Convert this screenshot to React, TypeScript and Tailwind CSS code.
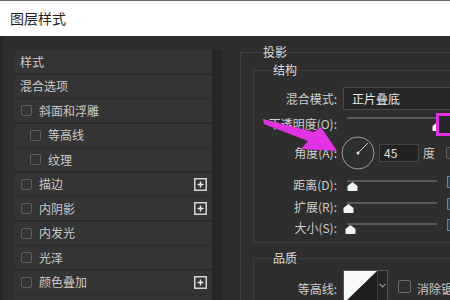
const rows = [
  { label: "样式" },
  { label: "混合选项" },
  { label: "斜面和浮雕", cb: true },
  { label: "等高线", cb: true, indent: true },
  { label: "纹理", cb: true, indent: true },
  { label: "描边", cb: true, plus: true },
  { label: "内阴影", cb: true, plus: true },
  { label: "内发光", cb: true },
  { label: "光泽", cb: true },
  { label: "颜色叠加", cb: true, plus: true },
  { label: "", cb: false },
]

function Box({ className = "" }: { className?: string }) {
  return <span className={"block w-[11px] h-[11px] shrink-0 rounded-[2px] border border-[#5e5e5e] bg-[#343434] " + className} />
}

function Plus() {
  return (
    <svg width="13" height="13" viewBox="0 0 13 13" className="ml-auto shrink-0">
      <rect x="0.75" y="0.75" width="11.5" height="11.5" fill="none" stroke="#d6d6d6" strokeWidth="1.5" />
      <path d="M3.5 6.5h6M6.5 3.5v6" stroke="#e8e8e8" strokeWidth="1.5" />
    </svg>
  )
}

function Thumb({ ml }: { ml: string }) {
  return (
    <svg width="11" height="9" viewBox="0 0 11 9" className={"block " + ml}>
      <path d="M5.5 0 10.5 4 10.5 8.2Q10.5 9 9.7 9H1.3Q0.5 9 0.5 8.2V4Z" fill="#f4f4f4" />
    </svg>
  )
}

function Label({ children }: { children: React.ReactNode }) {
  return <span className="w-[83px] shrink-0 text-right text-[12px] leading-none text-[#cdcdcd]">{children}</span>
}

function Slider({ thumb, gap = "" }: { thumb: string; gap?: string }) {
  return (
    <div className="ml-[6px] w-[94px] shrink-0 flex flex-col">
      <div className="ml-[4px] w-[90px] h-[2px] bg-[#5a5a5a]" />
      <div className={gap}>
        <Thumb ml={thumb} />
      </div>
    </div>
  )
}

function SideField() {
  return <div className="ml-[10px] w-[20px] h-[12px] shrink-0 -translate-y-[3px] border border-[#5f86a8] bg-[#2d4457]" />
}

export default function App() {
  return (
    <div className="relative w-[450px] h-[300px] overflow-hidden bg-[#2e2e2e] font-['Noto_Sans_CJK_SC','Microsoft_YaHei',sans-serif]">
      <div className="h-[36px] bg-white border-t border-[#6a6a6a] flex items-center pl-[10px]">
        <span className="text-[14px] text-[#1e1e1e]">图层样式</span>
      </div>

      <div className="flex h-[264px]">
        {/* left list */}
        <div className="w-[212px] shrink-0 pl-[12px] pt-[14px] border-l-[3px] border-[#262626]">
          <div className="flex flex-col gap-[1.5px] bg-[#2a2a2a]">
            {rows.map((r, i) => (
              <div key={i} className={"h-[23px] shrink-0 flex items-center bg-[#343434] pr-[5px] " + (r.indent ? "pl-[15px]" : r.cb ? "pl-[6px]" : "pl-[5px]")}>
                {r.cb && <Box className="mr-[7px]" />}
                <span className="text-[12px] leading-none text-[#cacaca]">{r.label}</span>
                {r.plus && <Plus />}
              </div>
            ))}
          </div>
        </div>
        <div className="w-[10px] shrink-0 mt-[14px] bg-[#272727]" />

        {/* right settings */}
        <div className="flex-1 pl-[18px] pt-[8px]">
          <fieldset className="border border-r-0 border-b-0 border-[#3f3f3f] h-[300px]">
            <legend className="ml-[22px] text-[12px] leading-[16px] text-[#dedede]">投影</legend>

            <fieldset className="ml-[12px] mt-[2px] border border-r-0 border-[#3f3f3f] pb-[4px]">
              <legend className="ml-[19px] text-[12px] leading-[16px] text-[#dedede]">结构</legend>

              <div className="mt-[9px] h-[23px] flex items-center">
                <Label>混合模式:</Label>
                <div className="ml-[6px] w-[120px] h-[23px] shrink-0 border border-[#4a4a4a] bg-[#262626] pl-[8px] flex items-center text-[12px] text-[#e8e8e8]">
                  正片叠底
                </div>
              </div>

              <div className="mt-[2px] h-[24px] flex items-center">
                <Label>不透明度(O):</Label>
                <Slider thumb="ml-[89px]" gap="mt-[3px]" />
                <div className="-ml-[1px] w-[22px] h-[23px] shrink-0 border-[3px] border-[#e22fe2] bg-[#262626]" />
              </div>

              <div className="h-[33px] flex items-center">
                <Label>角度(A):</Label>
                <svg width="34" height="34" viewBox="0 0 34 34" className="ml-[4px] shrink-0">
                  <circle cx="17" cy="17" r="16" fill="none" stroke="#9c9c9c" strokeWidth="1" />
                  <line x1="17" y1="17" x2="27" y2="7" stroke="#d0d0d0" strokeWidth="1" />
                  <circle cx="17" cy="17" r="1.5" fill="#e0e0e0" />
                </svg>
                <div className="ml-[4px] w-[40px] h-[18px] shrink-0 border border-[#454545] bg-[#222] pl-[4px] flex items-center text-[12px] text-[#e0e0e0]">
                  45
                </div>
                <span className="ml-[4px] text-[12px] leading-none text-[#c9c9c9]">度</span>
                <Box className="ml-[11px] w-[12px] h-[12px]" />
              </div>

              <div className="mt-[5px] h-[22px] flex items-center">
                <Label>距离(D):</Label>
                <Slider thumb="ml-[4px]" />
                <SideField />
              </div>
              <div className="h-[22px] flex items-center">
                <Label>扩展(R):</Label>
                <Slider thumb="ml-[0px]" />
                <SideField />
              </div>
              <div className="h-[20px] flex items-center">
                <Label>大小(S):</Label>
                <Slider thumb="ml-[2px]" />
                <SideField />
              </div>
            </fieldset>

            <fieldset className="ml-[12px] mt-[7px] border border-r-0 border-b-0 border-[#3f3f3f]">
              <legend className="ml-[19px] text-[12px] leading-[16px] text-[#dedede]">品质</legend>
              <div className="mt-[4px] h-[38px] flex items-center">
                <Label>等高线:</Label>
                <div className="ml-[6px] h-[38px] shrink-0 flex border border-[#555] bg-[#242424]">
                  <svg width="33" height="36" viewBox="0 0 33 36" className="block">
                    <rect width="33" height="36" fill="#1e1e1e" />
                    <polygon points="0,0 33,0 2,30 0,30" fill="#fafafa" />
                  </svg>
                  <div className="w-[10px] flex justify-center pt-[12px] border-l border-[#3c3c3c]">
                    <svg width="7" height="5" viewBox="0 0 7 5">
                      <path d="M0.5 0.8 3.5 3.8 6.5 0.8" fill="none" stroke="#9a9a9a" strokeWidth="1.2" />
                    </svg>
                  </div>
                </div>
                <span className="ml-[10px] self-start mt-[10px] block w-[13px] h-[13px] shrink-0 rounded-[2px] border border-[#6a6a6a] bg-[#2e2e2e]" />
                <span className="ml-[6px] whitespace-nowrap text-[12px] leading-none text-[#c9c9c9]">消除锯齿</span>
              </div>
            </fieldset>
          </fieldset>
        </div>
      </div>

      {/* annotation arrow */}
      <svg width="450" height="300" viewBox="0 0 450 300" className="absolute inset-0 pointer-events-none">
        <polygon points="263,119 314,132 321,127 337,151 301,149 308,141 264,124" fill="#e233e2" />
      </svg>
    </div>
  )
}
